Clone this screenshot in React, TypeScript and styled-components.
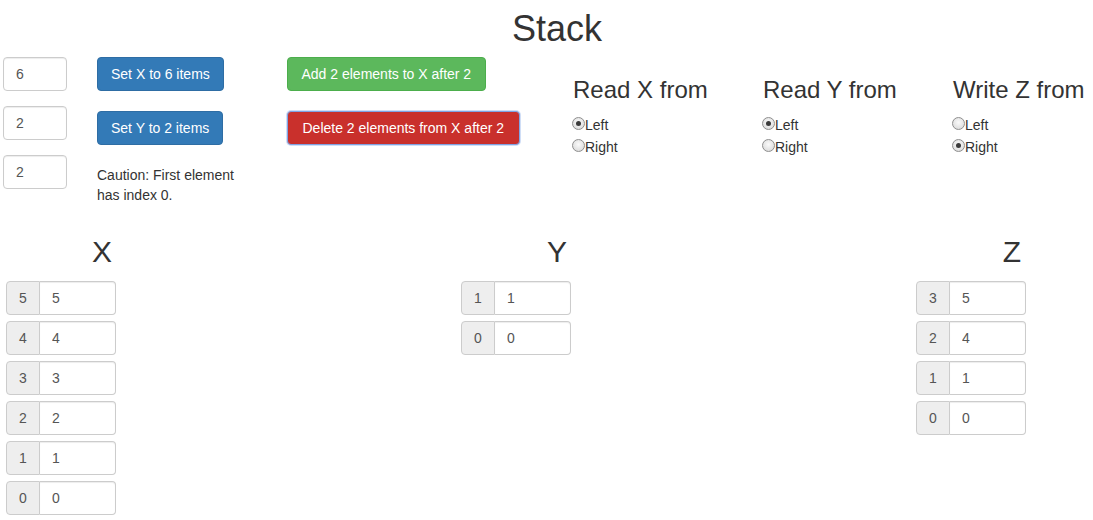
import React from "react";
import styled, { createGlobalStyle } from "styled-components";

const Global = createGlobalStyle`
  html, body { margin: 0; padding: 0; overflow: hidden; background: #fff; }
  body {
    font-family: "Liberation Sans", Helvetica, Arial, sans-serif;
    font-size: 14px;
    line-height: 20px;
    color: #333;
  }
  * { box-sizing: border-box; }
`;

const Page = styled.div`
  width: 1114px;
`;

const Title = styled.h1`
  margin: 9px 0 0;
  font-size: 36px;
  font-weight: 500;
  line-height: 40px;
  text-align: center;
`;

const Controls = styled.div`
  margin-top: 8px;
  padding-left: 3px;
  display: grid;
  grid-template-columns: 94px 190px 286px auto;
  align-items: start;
`;

const Stack = styled.div<{ $gap: number }>`
  display: flex;
  flex-direction: column;
  align-items: flex-start;
  gap: ${(p) => p.$gap}px;
`;

const TextInput = styled.input`
  width: 64px;
  height: 34px;
  padding: 6px 12px;
  font-family: inherit;
  font-size: 14px;
  color: #555;
  border: 1px solid #ccc;
  border-radius: 4px;
  box-shadow: inset 0 1px 1px rgba(0, 0, 0, 0.075);
  outline: none;
`;

const variants = {
  primary: { bg: "#337ab7", border: "#2e6da4" },
  success: { bg: "#5cb85c", border: "#4cae4c" },
  danger: { bg: "#c9302c", border: "#8f2420" },
};

const Button = styled.button<{ $variant: keyof typeof variants; $focused?: boolean; $padX?: number }>`
  height: 34px;
  padding: 6px ${(p) => p.$padX ?? 13}px;
  font-family: inherit;
  font-size: 14px;
  line-height: 20px;
  color: #fff;
  white-space: nowrap;
  background: ${(p) => variants[p.$variant].bg};
  border: 1px solid ${(p) => (p.$focused ? "#7fa3e3" : variants[p.$variant].border)};
  border-radius: 4px;
  cursor: pointer;
  box-shadow: ${(p) => (p.$focused ? "0 0 0 1px rgba(120,160,230,0.35)" : "none")};
`;

const Caution = styled.p`
  margin: 0;
  max-width: 155px;
  line-height: 20px;
`;

const Options = styled.div`
  display: grid;
  grid-template-columns: repeat(3, 190px);
`;

const OptionGroup = styled.div`
  display: flex;
  flex-direction: column;
`;

const GroupTitle = styled.h3`
  margin: 20px 0 11px;
  font-size: 24px;
  font-weight: 500;
  line-height: 26px;
  white-space: nowrap;
`;

const RadioRow = styled.label`
  display: flex;
  align-items: center;
  height: 22px;
  line-height: 22px;
  margin-left: -1px;
`;

const RadioDot = styled.span<{ $checked: boolean }>`
  width: 13px;
  height: 13px;
  margin-bottom: 3px;
  border-radius: 50%;
  border: 1px solid #8e8e8e;
  background: radial-gradient(circle at 50% 40%, #fafafa 0%, #e4e4e4 60%, #d2d2d2 100%);
  display: flex;
  align-items: center;
  justify-content: center;
  &::after {
    content: "";
    display: ${(p) => (p.$checked ? "block" : "none")};
    width: 5px;
    height: 5px;
    border-radius: 50%;
    background: #3a3a3a;
  }
`;

const Arrays = styled.div`
  margin-top: 30px;
  padding-left: 6px;
  display: grid;
  grid-template-columns: repeat(3, 192px);
  column-gap: 263px;
  align-items: start;
`;

const ArrayColumn = styled.div`
  display: flex;
  flex-direction: column;
`;

const ArrayTitle = styled.h2`
  margin: 0 0 13px;
  font-size: 30px;
  font-weight: 500;
  line-height: 33px;
  text-align: center;
`;

const Cells = styled.div`
  display: flex;
  flex-direction: column;
  gap: 6px;
`;

const InputGroup = styled.div`
  display: flex;
  width: 110px;
  height: 34px;
`;

const Addon = styled.span`
  width: 34px;
  padding: 6px 0;
  text-align: center;
  color: #555;
  background: #eee;
  border: 1px solid #ccc;
  border-radius: 4px 0 0 4px;
  line-height: 20px;
`;

const CellInput = styled.input`
  flex: 1;
  min-width: 0;
  padding: 6px 12px;
  font-family: inherit;
  font-size: 14px;
  color: #555;
  border: 1px solid #ccc;
  border-left: 0;
  border-radius: 0 4px 4px 0;
  box-shadow: inset 0 1px 1px rgba(0, 0, 0, 0.075);
  outline: none;
`;

type Opt = { title: string; checked: "Left" | "Right" };
const options: Opt[] = [
  { title: "Read X from", checked: "Left" },
  { title: "Read Y from", checked: "Left" },
  { title: "Write Z from", checked: "Right" },
];

const arrays: { name: string; values: number[] }[] = [
  { name: "X", values: [5, 4, 3, 2, 1, 0] },
  { name: "Y", values: [1, 0] },
  { name: "Z", values: [5, 4, 1, 0] },
];

export default function App() {
  return (
    <>
      <Global />
      <Page>
        <Title>Stack</Title>
        <Controls>
          <Stack $gap={15}>
            <TextInput defaultValue="6" />
            <TextInput defaultValue="2" />
            <TextInput defaultValue="2" />
          </Stack>
          <Stack $gap={20}>
            <Button $variant="primary">Set X to 6 items</Button>
            <Button $variant="primary">Set Y to 2 items</Button>
            <Caution>Caution: First element has index 0.</Caution>
          </Stack>
          <Stack $gap={20}>
            <Button $variant="success" $padX={13.5}>Add 2 elements to X after 2</Button>
            <Button $variant="danger" $focused $padX={14.5}>
              Delete 2 elements from X after 2
            </Button>
          </Stack>
          <Options>
            {options.map((o) => (
              <OptionGroup key={o.title}>
                <GroupTitle>{o.title}</GroupTitle>
                {(["Left", "Right"] as const).map((side) => (
                  <RadioRow key={side}>
                    <RadioDot $checked={o.checked === side} />
                    {side}
                  </RadioRow>
                ))}
              </OptionGroup>
            ))}
          </Options>
        </Controls>
        <Arrays>
          {arrays.map((a) => (
            <ArrayColumn key={a.name}>
              <ArrayTitle>{a.name}</ArrayTitle>
              <Cells>
                {a.values.map((v, i) => (
                  <InputGroup key={i}>
                    <Addon>{a.values.length - 1 - i}</Addon>
                    <CellInput defaultValue={String(v)} />
                  </InputGroup>
                ))}
              </Cells>
            </ArrayColumn>
          ))}
        </Arrays>
      </Page>
    </>
  );
}
